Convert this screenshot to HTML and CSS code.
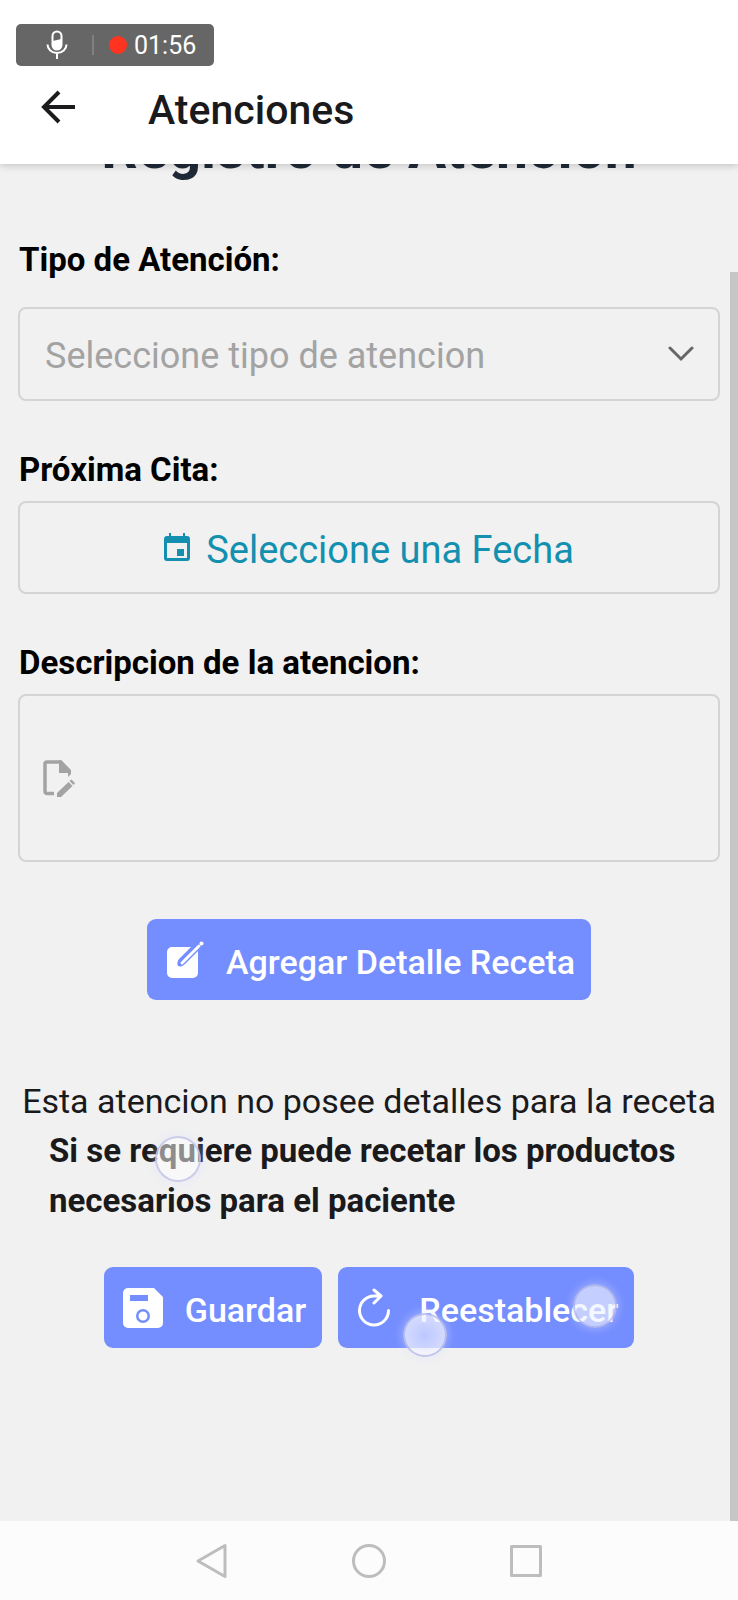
FILE: index.html
```html
<!DOCTYPE html>
<html lang="es">
<head>
<meta charset="utf-8">
<meta name="viewport" content="width=device-width, initial-scale=1">
<title>Atenciones</title>
<link rel="stylesheet" href="styles.css">
</head>
<body>
<header class="topbar">
  <div class="recorder">
    <svg class="mic" viewBox="0 0 22 30" aria-hidden="true">
      <rect x="6.500" y="1.500" width="9" height="18" rx="4.500" fill="none" stroke="#fff" stroke-width="2"/>
      <path d="M6.500 11l9-2v6a4.500 4.500 0 0 1-9 0z" fill="#fff"/>
      <path d="M1.500 14.500a9.500 8.500 0 0 0 19 0M11 23v6" fill="none" stroke="#fff" stroke-width="2"/>
    </svg>
    <span class="divider"></span>
    <span class="dot"></span>
    <span class="time">01:56</span>
  </div>
  <div class="titlebar">
    <button class="back" type="button" aria-label="Volver">
      <svg viewBox="0 0 34 34" aria-hidden="true"><path d="M34 17H3M18 2L3 17l15 15" fill="none" stroke="#1c1c1e" stroke-width="4"/></svg>
    </button>
    <h1 class="title">Atenciones</h1>
  </div>
</header>

<main class="content">
  <form class="form">
    <h2 class="heading">Registro de Atención</h2>

    <label class="label label-first" for="tipo">Tipo de Atención:</label>
    <div class="select-wrap">
      <select class="select" id="tipo"><option>Seleccione tipo de atencion</option></select>
      <svg class="chevron" viewBox="0 0 26 16" aria-hidden="true"><path d="M2 2l11 11L24 2" fill="none" stroke="#666" stroke-width="3" stroke-linecap="round"/></svg>
    </div>

    <label class="label" for="fecha">Próxima Cita:</label>
    <button class="date" id="fecha" type="button">
      <svg class="calendar" viewBox="0 0 26 28" aria-hidden="true">
        <path fill-rule="evenodd" d="M5 0h2v3h12V0h2v3h2a3 3 0 0 1 3 3v19a3 3 0 0 1-3 3H3a3 3 0 0 1-3-3V6a3 3 0 0 1 3-3h2zM3 10v15h20V10zM13 16h7v7h-7z" fill="#1390b0"/>
      </svg>
      <span>Seleccione una Fecha</span>
    </button>

    <label class="label" for="descripcion">Descripcion de la atencion:</label>
    <div class="area">
      <svg class="note" viewBox="0 0 32 37" aria-hidden="true">
        <path d="M11 33.500H4a2 2 0 0 1-2-2V4a2 2 0 0 1 2-2h14" fill="none" stroke="#a3a3a3" stroke-width="3.500"/>
        <path d="M16 .300h2.500L28 10v4l-3 3v-4h-9z" fill="#a3a3a3"/>
        <path d="M14 37v-4l11.500-11 4 4L18 37zM26.500 21l2-1.500 3.500 3.500-1.500 2z" fill="#a3a3a3"/>
      </svg>
      <textarea class="textarea" id="descripcion"></textarea>
    </div>

    <button class="btn btn-add" type="button">
      <svg class="icon-edit" viewBox="0 0 38 38" aria-hidden="true">
        <path d="M6 6h19L13 18c-2 3-2 5-1 7 3 1 5 0 7-2L32 10v22a5 5 0 0 1-5 5H6a5 5 0 0 1-5-5V11a5 5 0 0 1 5-5z" fill="#fff"/>
        <path d="M16 22L33 5" stroke="#fff" stroke-width="3" stroke-linecap="round"/>
        <circle cx="35.500" cy="2.500" r="2" fill="#fff"/>
      </svg>
      <span>Agregar Detalle Receta</span>
    </button>

    <div class="message">
      <p class="empty">Esta atencion no posee detalles para la receta</p>
      <p class="hint">Si se requiere puede recetar los productos necesarios para el paciente</p>
      <span class="touch touch-text"></span>
    </div>

    <div class="actions">
      <button class="btn" type="submit">
        <svg class="icon-save" viewBox="0 0 40 40" aria-hidden="true">
          <path fill-rule="evenodd" d="M5 0h26l9 9v26a5 5 0 0 1-5 5H5a5 5 0 0 1-5-5V5a5 5 0 0 1 5-5zM7 7v6h18V7zM20 21a7 7 0 1 0 0 14 7 7 0 0 0 0-14zM20 23.500a4.500 4.500 0 1 1 0 9 4.500 4.500 0 0 1 0-9z" fill="#fff"/>
        </svg>
        <span>Guardar</span>
      </button>
      <button class="btn btn-reset" type="reset">
        <svg class="icon-reset" viewBox="0 0 34 40" aria-hidden="true">
          <path d="M22 8h-5a14.500 14.500 0 1 0 14.500 14.500M17 2l7 6-7 7" fill="none" stroke="#fff" stroke-width="3" stroke-linecap="round" stroke-linejoin="round"/>
        </svg>
        <span>Reestablecer</span>
        <i class="touch touch-low"></i>
        <i class="touch touch-high"></i>
      </button>
    </div>
  </form>
  <div class="scroll-thumb"></div>
</main>

<nav class="navbar">
  <button class="nav-btn" type="button" aria-label="Atrás"><svg viewBox="0 0 36 36" aria-hidden="true"><path d="M31 2.500v31L4 18z"/></svg></button>
  <button class="nav-btn" type="button" aria-label="Inicio"><svg viewBox="0 0 36 36" aria-hidden="true"><circle cx="18" cy="18" r="15.500"/></svg></button>
  <button class="nav-btn" type="button" aria-label="Recientes"><svg viewBox="0 0 36 36" aria-hidden="true"><rect x="3.500" y="3.500" width="29" height="29"/></svg></button>
</nav>
</body>
</html>
```
FILE: styles.css
```css
* { box-sizing: border-box; }

body {
  margin: 0;
  min-height: 100vh;
  display: flex;
  flex-direction: column;
  background: #f1f1f1;
  color: #1a1a1c;
  font-family: Roboto, "Liberation Sans", sans-serif;
}

svg { display: block; flex: none; }
button, select, textarea { font-family: inherit; margin: 0; }
button { border: 0; background: none; padding: 0; }

.topbar {
  position: relative;
  z-index: 1;
  background: #fff;
  padding: 24px 16px 30px;
  box-shadow: 0 1px 8px rgba(0, 0, 0, 0.22);
}

.recorder {
  display: flex;
  align-items: center;
  width: 198px;
  height: 42px;
  padding-left: 30px;
  border-radius: 5px;
  background: #666;
  color: #fff;
}
.mic { width: 22px; height: 30px; }
.divider { width: 2px; height: 20px; margin: 0 15px 0 24px; background: #808080; }
.dot { width: 18px; height: 18px; border-radius: 50%; background: #ff3420; }
.time { margin-left: 7px; padding-top: 2px; font-size: 25px; line-height: 40px; }

.titlebar { display: flex; align-items: center; padding: 16px 0 0 25px; }
.back svg { width: 34px; height: 34px; }
.back { padding-bottom: 2px; }
.title { margin: 0 0 0 73px; padding-top: 4px; font-size: 41px; font-weight: 500; line-height: 48px; }

.content { position: relative; flex: 1; overflow: hidden; }
.form {
  display: flex;
  flex-direction: column;
  margin-top: -44px;
  padding: 0 18px 48px;
}
.heading {
  margin: 0;
  color: #1f2937;
  font-size: 57px;
  font-weight: 700;
  line-height: 58px;
  text-align: center;
}

.label {
  margin: 49px 0 11px;
  padding-left: 1px;
  color: #000;
  font-size: 33px;
  font-weight: 700;
  line-height: 40px;
}
.label-first { margin: 62px 0 27px; }

.select-wrap { display: grid; align-items: center; }
.select, .chevron { grid-area: 1 / 1; }
.select, .date, .area {
  width: 100%;
  border: 2px solid #d4d4d4;
  border-radius: 8px;
  background: transparent;
}
.select {
  height: 94px;
  padding: 4px 25px 0;
  appearance: none;
  color: #a3a3a3;
  font-size: 36px;
}
.chevron { justify-self: end; width: 26px; height: 16px; margin-right: 26px; pointer-events: none; }

.date {
  display: flex;
  align-items: center;
  justify-content: center;
  gap: 16px;
  height: 93px;
  color: #1390b0;
  font-size: 38px;
}
.date span { padding-top: 4px; }
.calendar { width: 26px; height: 28px; margin-bottom: 2px; }

.area { display: flex; align-items: center; gap: 16px; height: 168px; padding: 8px 23px; }
.note { width: 32px; height: 37px; }
.textarea {
  flex: 1;
  height: 100%;
  border: 0;
  outline: 0;
  padding: 8px;
  resize: none;
  background: transparent;
  font-size: 33px;
}

.btn {
  position: relative;
  display: flex;
  align-items: center;
  gap: 22px;
  height: 81px;
  padding: 0 16px 0 19px;
  border-radius: 9px;
  background: #748dff;
  color: #fff;
  font-size: 34px;
  font-weight: 500;
}
.btn span { padding-top: 4px; }
.btn-add { align-self: center; margin-top: 57px; }
.icon-edit { width: 38px; height: 38px; }
.icon-save { width: 40px; height: 40px; }
.icon-reset { width: 34px; height: 40px; }
.btn-reset { gap: 28px; }

.message {
  position: relative;
  margin: 76px 0 41px;
  font-size: 34px;
  line-height: 50px;
}
.message p { margin: 0; }
.empty { text-align: center; white-space: nowrap; }
.hint { padding: 0 31px; font-size: 33px; font-weight: 700; }

.actions { display: flex; justify-content: center; gap: 16px; }

.touch {
  position: absolute;
  width: 44px;
  height: 44px;
  border: 2px solid rgba(160, 165, 225, 0.6);
  border-radius: 50%;
  background: radial-gradient(rgba(215, 220, 255, 0.75), rgba(255, 255, 255, 0.75));
  box-shadow: 0 0 8px 2px rgba(220, 225, 255, 0.35);
  pointer-events: none;
}
.touch-text {
  left: 137px;
  top: 60px;
  width: 46px;
  height: 46px;
  border-color: rgba(190, 193, 230, 0.8);
  background: rgba(255, 255, 255, 0.5);
}
.touch-low { left: 65px; top: 46px; }
.touch-high { right: 17px; top: 17px; background: rgba(240, 242, 255, 0.65); }

.scroll-thumb { position: absolute; top: 108px; right: 0; bottom: 0; width: 8px; background: #c6c6c6; }

.navbar {
  display: flex;
  justify-content: center;
  align-items: center;
  gap: 121px;
  height: 79px;
  background: #fcfcfc;
}
.nav-btn svg {
  width: 36px;
  height: 36px;
  fill: none;
  stroke: #bdbdbd;
  stroke-width: 3;
  stroke-linejoin: round;
}
```
